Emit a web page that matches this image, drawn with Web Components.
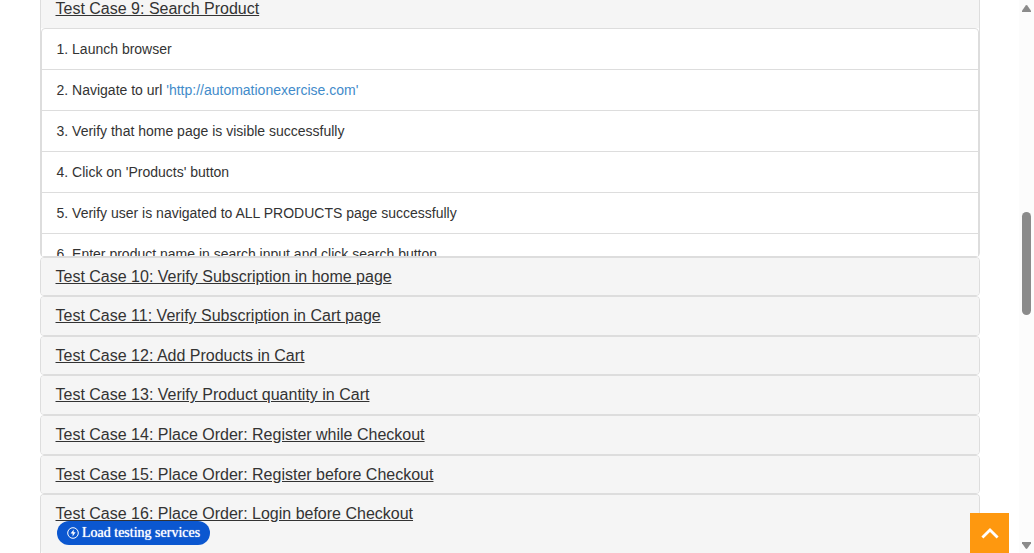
<!DOCTYPE html>
<html lang="en">
<head>
<meta charset="utf-8">
<meta name="viewport" content="width=device-width, initial-scale=1">
<title>Test Cases</title>
<style>
body { margin: 0; background: #fff; color: #333; font: 14px/20px "Liberation Sans", Arial, sans-serif; }
</style>
</head>
<body>
<app-page>
  <case-panel open>
    <span slot="title">Test Case 9: Search Product</span>
    <step-list>
      <step-item>1. Launch browser</step-item>
      <step-item>2. Navigate to url <site-link href="http://automationexercise.com">'http://automationexercise.com'</site-link></step-item>
      <step-item>3. Verify that home page is visible successfully</step-item>
      <step-item>4. Click on 'Products' button</step-item>
      <step-item>5. Verify user is navigated to ALL PRODUCTS page successfully</step-item>
      <step-item>6. Enter product name in search input and click search button</step-item>
    </step-list>
  </case-panel>
  <case-panel><span slot="title">Test Case 10: Verify Subscription in home page</span></case-panel>
  <case-panel><span slot="title">Test Case 11: Verify Subscription in Cart page</span></case-panel>
  <case-panel><span slot="title">Test Case 12: Add Products in Cart</span></case-panel>
  <case-panel><span slot="title">Test Case 13: Verify Product quantity in Cart</span></case-panel>
  <case-panel><span slot="title">Test Case 14: Place Order: Register while Checkout</span></case-panel>
  <case-panel><span slot="title">Test Case 15: Place Order: Register before Checkout</span></case-panel>
  <case-panel fill><span slot="title">Test Case 16: Place Order: Login before Checkout</span></case-panel>
  <promo-pill slot="overlay">Load testing services</promo-pill>
  <scroll-up slot="overlay"></scroll-up>
  <scroll-rail slot="rail"></scroll-rail>
</app-page>
<script>
const define = (name, html) => {
  const template = document.createElement('template');
  template.innerHTML = html;
  customElements.define(name, class extends HTMLElement {
    constructor() {
      super();
      this.attachShadow({ mode: 'open' }).append(template.content.cloneNode(true));
    }
    connectedCallback() {
      const link = this.shadowRoot.querySelector('a');
      if (link && this.hasAttribute('href')) link.href = this.getAttribute('href');
    }
  });
};

define('app-page', `
<style>
  :host { display: grid; grid-template-columns: minmax(0, 1fr) 15px; height: 100vh; overflow: hidden; position: relative; }
  main { display: flex; flex-direction: column; box-sizing: border-box; width: 100%; max-width: 970px; min-height: 0; margin: -11px auto 0; padding: 0 15px; }
</style>
<main><slot></slot></main>
<slot name="rail"></slot>
<slot name="overlay"></slot>`);

define('case-panel', `
<style>
  :host { display: flex; flex-direction: column; flex: none; border: 1px solid #ddd; border-radius: 4px; background: #fff; }
  :host([fill]) { flex: 1 0 auto; border-bottom: 0; border-radius: 4px 4px 0 0; }
  header { padding: 10px 15px; background: #f5f5f5; border-radius: 3px; }
  :host([open]) header { border-radius: 3px 3px 0 0; }
  :host([fill]) header { flex: 1; }
  h4 { margin: 0; font-size: 16px; font-weight: 400; line-height: 1.1; }
  a { color: inherit; text-decoration: underline; }
</style>
<header><h4><a href="#"><slot name="title"></slot></a></h4></header>
<slot></slot>`);

define('step-list', `
<style>
  :host { display: block; height: 228px; overflow: hidden; }
  div { border: 1px solid #ddd; border-radius: 4px; background: #fff; }
</style>
<div role="list"><slot></slot></div>`);

define('step-item', `
<style>
  :host { display: block; padding: 10px 15px; border-bottom: 1px solid #ddd; }
</style>
<slot></slot>`);

define('site-link', `
<style>
  :host { display: inline; }
  a { color: #428bca; text-decoration: none; }
</style>
<a><slot></slot></a>`);

define('promo-pill', `
<style>
  :host { position: absolute; left: 57px; bottom: 8px; }
  button { display: flex; align-items: center; gap: 3px; height: 24px; padding: 0 10px; border: 0; border-radius: 12px; background: #0b57d0; color: #fff; font: 400 14px/20px "Liberation Serif", "Times New Roman", serif; text-shadow: 0 0 1px #fff; }
  svg { display: block; }
</style>
<button type="button">
  <svg width="12" height="12" viewBox="0 0 12 12" aria-hidden="true"><circle cx="6" cy="6" r="5.3" fill="none" stroke="#fff" stroke-width="1"/><path d="M6.7 2.4 3.6 6.6h2v3l3-4.3h-2z" fill="#fff"/></svg>
  <slot></slot>
</button>`);

define('scroll-up', `
<style>
  :host { position: absolute; right: 25px; bottom: 0; }
  button { display: flex; align-items: center; justify-content: center; width: 39px; height: 40px; padding: 0; border: 0; background: #fe980f; }
</style>
<button type="button" aria-label="Scroll to top">
  <svg width="20" height="14" viewBox="0 0 20 14" aria-hidden="true"><path d="M2.4 11.6 10 4l7.6 7.6" fill="none" stroke="#fff" stroke-width="2.8"/></svg>
</button>`);

define('scroll-rail', `
<style>
  :host { display: flex; flex-direction: column; align-items: center; box-sizing: border-box; height: 100vh; padding: 5px 0 4px; background: #fcfcfc; }
  svg { display: block; flex: none; }
  i { flex: 0 0 103px; width: 9px; border-radius: 5px; background: #8b8b8b; }
  .before { flex: 200 1 0; }
  .after { flex: 227 1 0; }
</style>
<svg width="9" height="7" viewBox="0 0 9 7" aria-hidden="true"><path d="M3.7.4Q4.5-.2 5.3.4L9 5.8V7H0V5.8z" fill="#8b8b8b"/></svg>
<span class="before"></span><i></i><span class="after"></span>
<svg width="9" height="7" viewBox="0 0 9 7" aria-hidden="true"><path d="M3.7 6.6q.8.6 1.6 0L9 1.2V0H0v1.2z" fill="#8b8b8b"/></svg>`);
</script>
</body>
</html>
